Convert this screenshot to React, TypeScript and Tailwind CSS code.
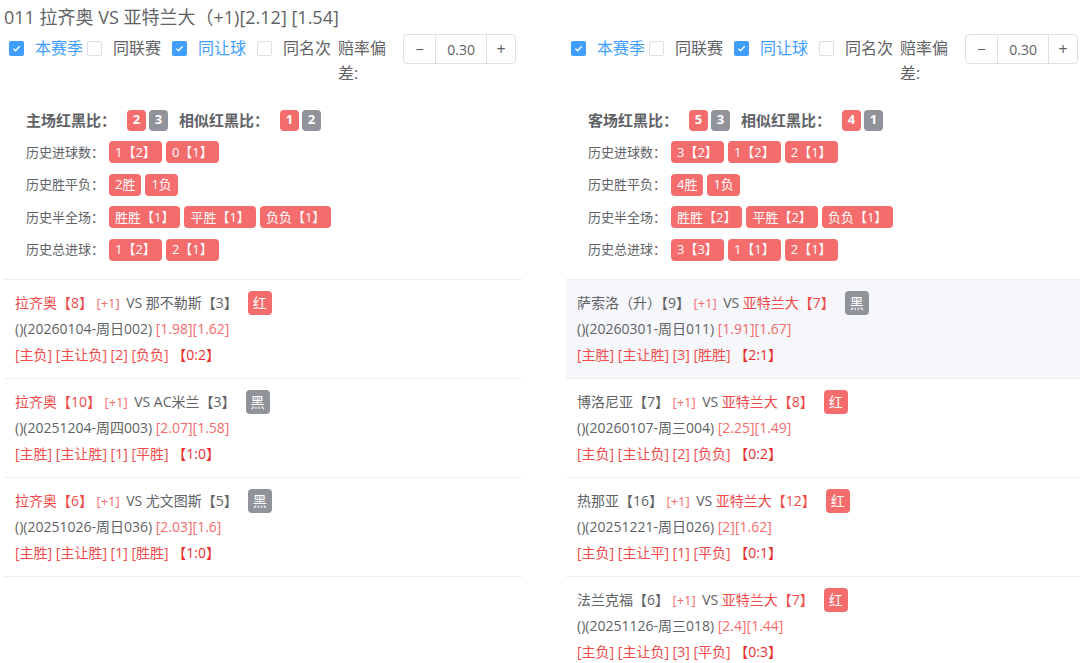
import React from "react";

type Match = {
  home: string;
  away: string;
  redSide: "home" | "away";
  result: "红" | "黑";
  date: string;
  odds: string;
  tags: string;
  score: string;
  active?: boolean;
};

type Side = {
  ratioLabel: string;
  ratio: [number, number];
  similar: [number, number];
  rows: { label: string; items: string[] }[];
  matches: Match[];
};

const home: Side = {
  ratioLabel: "主场红黑比：",
  ratio: [2, 3],
  similar: [1, 2],
  rows: [
    { label: "历史进球数：", items: ["1【2】", "0【1】"] },
    { label: "历史胜平负：", items: ["2胜", "1负"] },
    { label: "历史半全场：", items: ["胜胜【1】", "平胜【1】", "负负【1】"] },
    { label: "历史总进球：", items: ["1【2】", "2【1】"] },
  ],
  matches: [
    { home: "拉齐奥【8】", away: "那不勒斯【3】", redSide: "home", result: "红", date: "()(20260104-周日002)", odds: "[1.98][1.62]", tags: "[主负] [主让负] [2] [负负]", score: "【0:2】" },
    { home: "拉齐奥【10】", away: "AC米兰【3】", redSide: "home", result: "黑", date: "()(20251204-周四003)", odds: "[2.07][1.58]", tags: "[主胜] [主让胜] [1] [平胜]", score: "【1:0】" },
    { home: "拉齐奥【6】", away: "尤文图斯【5】", redSide: "home", result: "黑", date: "()(20251026-周日036)", odds: "[2.03][1.6]", tags: "[主胜] [主让胜] [1] [胜胜]", score: "【1:0】" },
  ],
};

const away: Side = {
  ratioLabel: "客场红黑比：",
  ratio: [5, 3],
  similar: [4, 1],
  rows: [
    { label: "历史进球数：", items: ["3【2】", "1【2】", "2【1】"] },
    { label: "历史胜平负：", items: ["4胜", "1负"] },
    { label: "历史半全场：", items: ["胜胜【2】", "平胜【2】", "负负【1】"] },
    { label: "历史总进球：", items: ["3【3】", "1【1】", "2【1】"] },
  ],
  matches: [
    { home: "萨索洛（升）【9】", away: "亚特兰大【7】", redSide: "away", result: "黑", date: "()(20260301-周日011)", odds: "[1.91][1.67]", tags: "[主胜] [主让胜] [3] [胜胜]", score: "【2:1】", active: true },
    { home: "博洛尼亚【7】", away: "亚特兰大【8】", redSide: "away", result: "红", date: "()(20260107-周三004)", odds: "[2.25][1.49]", tags: "[主负] [主让负] [2] [负负]", score: "【0:2】" },
    { home: "热那亚【16】", away: "亚特兰大【12】", redSide: "away", result: "红", date: "()(20251221-周日026)", odds: "[2][1.62]", tags: "[主负] [主让平] [1] [平负]", score: "【0:1】" },
    { home: "法兰克福【6】", away: "亚特兰大【7】", redSide: "away", result: "红", date: "()(20251126-周三018)", odds: "[2.4][1.44]", tags: "[主负] [主让负] [3] [平负]", score: "【0:3】" },
  ],
};

const Check = ({ checked, label, gap }: { checked: boolean; label: string; gap: string }) => (
  <div className="flex shrink-0 items-center h-[28px] whitespace-nowrap">
    {checked ? (
      <span className="w-[15px] h-[15px] rounded-[2px] bg-[#409eff] flex items-center justify-center">
        <svg width="11" height="11" viewBox="0 0 10 10">
          <path d="M2.2 5.2 L4.2 7.1 L7.9 3" fill="none" stroke="#fff" strokeWidth="1.2" />
        </svg>
      </span>
    ) : (
      <span className="w-[15px] h-[15px] rounded-[2px] border border-[#dcdfe6] bg-white" />
    )}
    <span className={`ml-[11px] ${gap} text-[16px] ${checked ? "text-[#409eff]" : "text-[#606266]"}`}>{label}</span>
  </div>
);

const Toolbar = () => (
  <div className="flex items-start pl-[5px] h-[70px]">
    <Check checked label="本赛季" gap="mr-[4px]" />
    <Check checked={false} label="同联赛" gap="mr-[11px]" />
    <Check checked label="同让球" gap="mr-[11px]" />
    <Check checked={false} label="同名次" gap="mr-[7px]" />
    <div className="w-[52px] shrink-0 text-[16px] leading-[25px] text-[#606266] pt-[2px]">赔率偏差:</div>
    <div className="ml-[13px] shrink-0 flex h-[30px] w-[113px] border border-[#dcdfe6] rounded-[4px] text-[#606266] bg-white">
      <span className="w-[32px] flex items-center justify-center border-r border-[#dcdfe6] text-[15px]">−</span>
      <span className="flex-1 flex items-center justify-center text-[14px]">0.30</span>
      <span className="w-[29px] flex items-center justify-center border-l border-[#dcdfe6] text-[16px]">+</span>
    </div>
  </div>
);

const Num = ({ n, red }: { n: number; red: boolean }) => (
  <span className={`w-[19px] h-[21px] rounded-[4px] flex items-center justify-center text-white text-[13px] font-bold ${red ? "bg-[#f56c6c]" : "bg-[#909399]"}`}>
    {n}
  </span>
);

const Stats = ({ side }: { side: Side }) => (
  <div className="pl-[22px] h-[176px] border-b border-[#ebeef5]">
    <div className="flex items-center h-[32px] gap-[3px]">
      <span className="text-[15px] font-bold text-[#606266] mr-[8px]">{side.ratioLabel}</span>
      <Num n={side.ratio[0]} red />
      <Num n={side.ratio[1]} red={false} />
      <span className="text-[15px] font-bold text-[#606266] ml-[8px] mr-[8px]">相似红黑比：</span>
      <Num n={side.similar[0]} red />
      <Num n={side.similar[1]} red={false} />
    </div>
    {side.rows.map((r) => (
      <div key={r.label} className="flex items-center h-[32.5px]">
        <span className="w-[83px] text-[13px] text-[#606266]">{r.label}</span>
        <div className="flex gap-[4px]">
          {r.items.map((it) => (
            <span key={it} className="h-[22px] px-[6px] rounded-[4px] bg-[#f56c6c] text-white text-[13px] flex items-center">
              {it}
            </span>
          ))}
        </div>
      </div>
    ))}
  </div>
);

const MatchItem = ({ m }: { m: Match }) => {
  const homeCls = m.redSide === "home" ? "text-[#f04a4a]" : "text-[#606266]";
  const awayCls = m.redSide === "away" ? "text-[#f04a4a]" : "text-[#606266]";
  return (
    <div className={`pl-[11px] py-[10px] border-b border-[#ebeef5] text-[14px] leading-[26px] ${m.active ? "bg-[#f5f7fa]" : ""}`}>
      <div className="flex items-center h-[26px] whitespace-pre">
        <span className={homeCls}>{m.home}</span>
        <span className="text-[#f56c6c] text-[13px]"> [+1] </span>
        <span className="text-[#606266] ml-[3px]">VS </span>
        <span className={awayCls}>{m.away}</span>
        <span className={`ml-[10px] w-[24px] h-[24px] rounded-[4px] flex items-center justify-center text-white text-[14px] ${m.result === "红" ? "bg-[#f56c6c]" : "bg-[#909399]"}`}>
          {m.result}
        </span>
      </div>
      <div className="whitespace-pre">
        <span className="text-[#606266]">{m.date} </span>
        <span className="text-[#f56c6c]">{m.odds}</span>
      </div>
      <div className="whitespace-pre">
        <span className="text-[#f04a4a]">{m.tags} </span>
        <span className="text-[#e83030]">{m.score}</span>
      </div>
    </div>
  );
};

const Column = ({ side, className }: { side: Side; className: string }) => (
  <div className={className}>
    <Toolbar />
    <Stats side={side} />
    {side.matches.map((m) => (
      <MatchItem key={m.date} m={m} />
    ))}
  </div>
);

export default function App() {
  return (
    <div
      className="w-[1080px] h-[663px] overflow-hidden bg-white"
      style={{ fontFamily: '"Open Sans", "Noto Sans CJK SC", sans-serif' }}
    >
      <div className="h-[34px] pl-[4px] flex items-center text-[18px] text-[#606266] whitespace-pre">
        011 拉齐奥 VS 亚特兰大（+1)[2.12] [1.54]
      </div>
      <div className="flex">
        <Column side={home} className="ml-[4px] w-[518px] shrink-0" />
        <Column side={away} className="ml-[44px] w-[514px] shrink-0" />
      </div>
    </div>
  );
}
